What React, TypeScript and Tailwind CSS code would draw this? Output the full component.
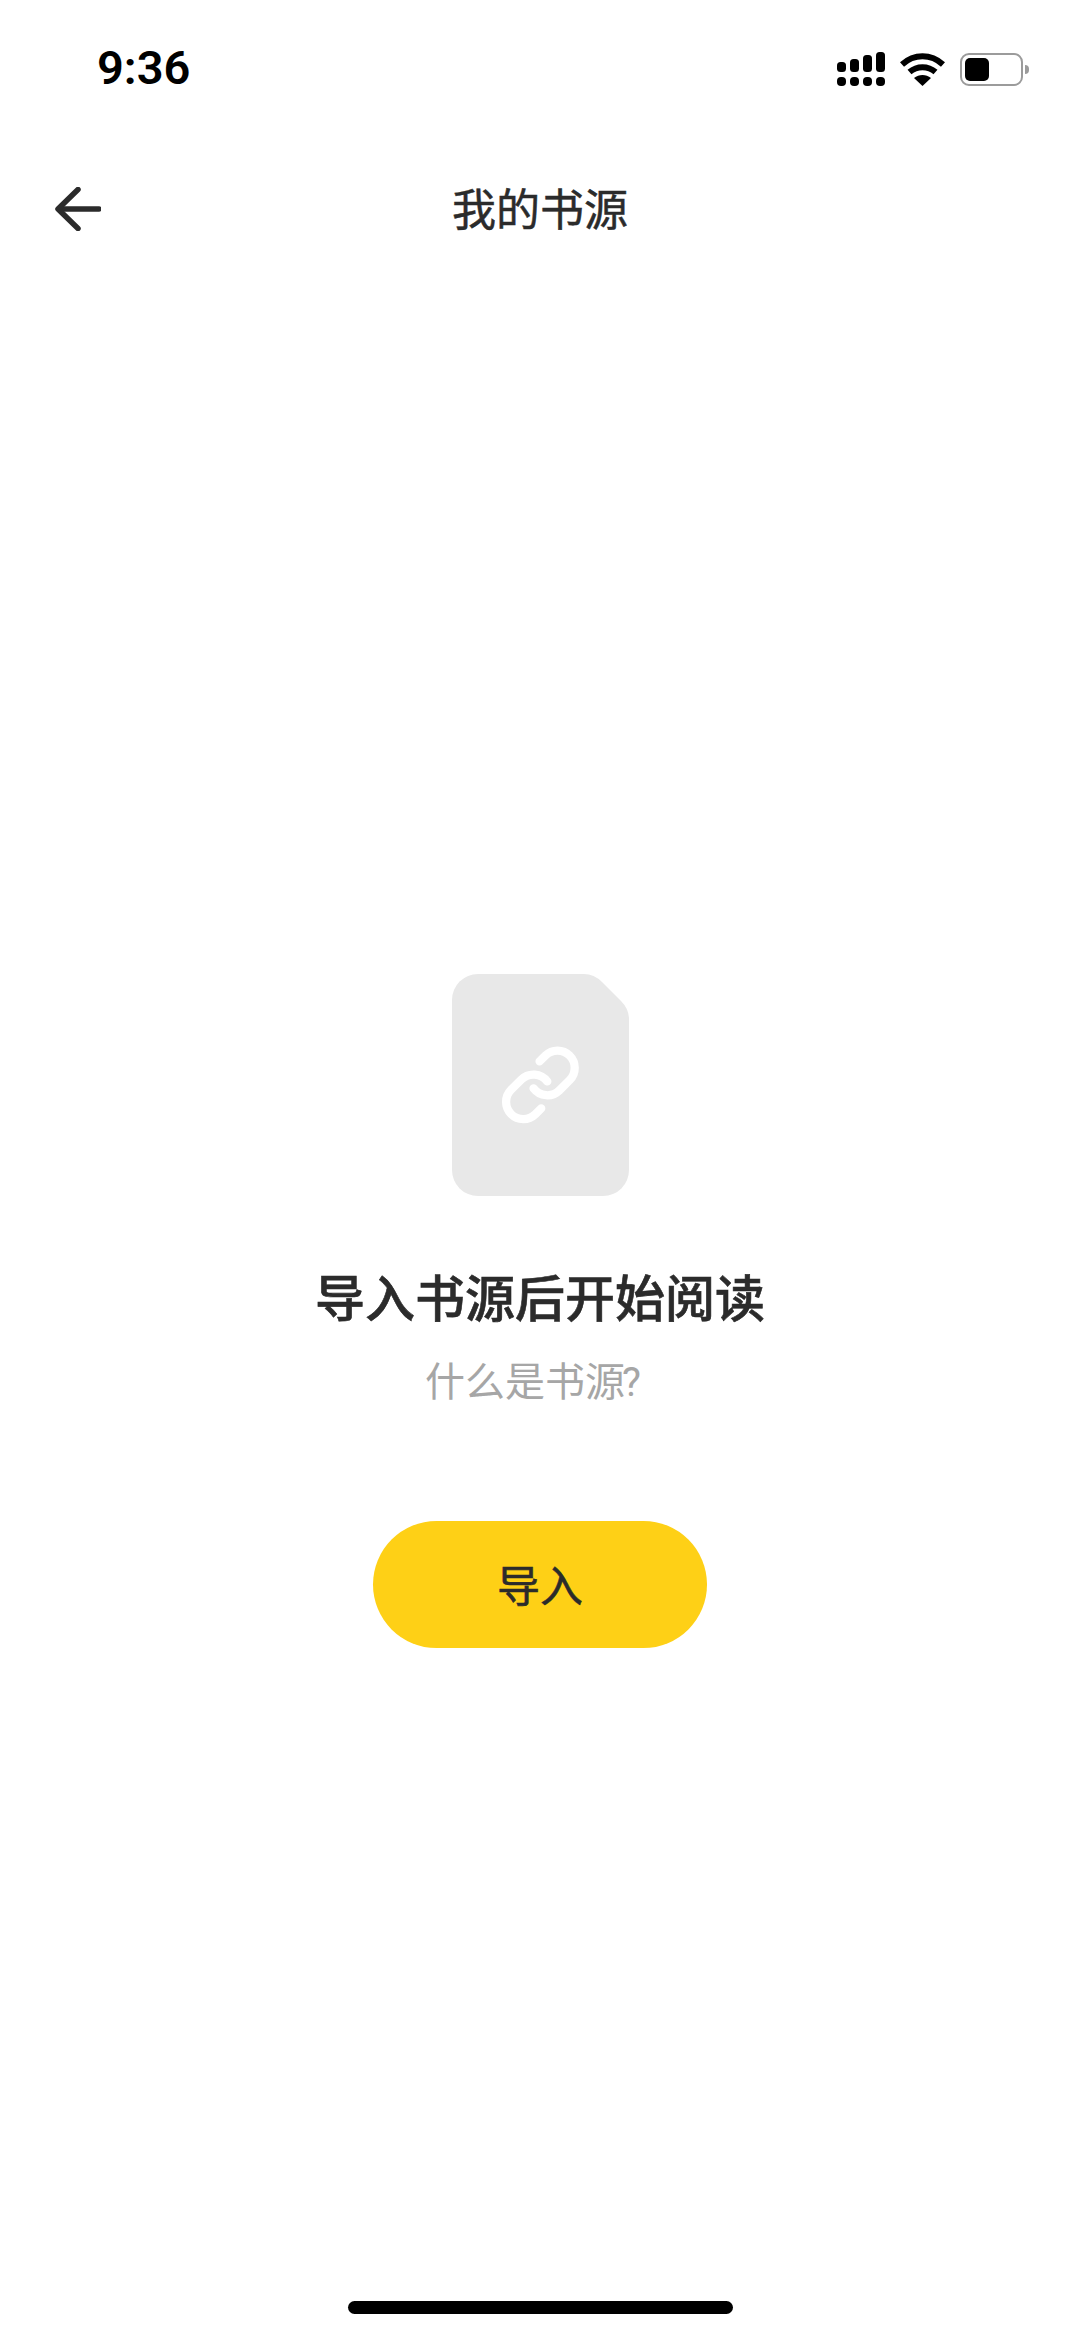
import { ReactNode } from "react";

const cjk = "font-['Noto_Sans_CJK_SC','Noto_Sans',sans-serif]";

function SignalIcon() {
  const xs = [0, 13, 26, 39];
  const tops = [10, 7, 3, 0];
  return (
    <svg width="48" height="34" viewBox="0 0 48 34" fill="#000">
      {xs.map((x, i) => (
        <g key={x}>
          <rect x={x} y={tops[i]} width="9" height={20 - tops[i]} rx="3.5" />
          <rect x={x} y="25" width="9" height="9" rx="4" />
        </g>
      ))}
    </svg>
  );
}

function WifiIcon() {
  return (
    <svg width="45" height="33" viewBox="0 0 45 33" fill="none" stroke="#000" strokeWidth="6">
      <path d="M2 11.5C14 0.5 31 0.5 43 11.5" />
      <path d="M9.5 19C17 12.5 28 12.5 35.5 19" />
      <path d="M22.5 33L14 25C19 21 26 21 31 25Z" fill="#000" stroke="none" />
    </svg>
  );
}

function BatteryIcon() {
  return (
    <div className="flex items-center">
      <div className="flex h-[33px] w-[63px] items-center rounded-[9px] border-[2.5px] border-[#9b9b9b] pl-[3px]">
        <div className="h-[23px] w-[24px] rounded-[5px] bg-black" />
      </div>
      <div className="ml-[2px] h-[9px] w-[4px] rounded-r-full bg-[#9b9b9b]" />
    </div>
  );
}

function StatusBar() {
  return (
    <div className="flex h-[86px] items-end pl-[97px] pr-[51px]">
      <span className="mb-[-5px] font-['Roboto',sans-serif] text-[47px] leading-[46px] font-semibold text-black">
        9:36
      </span>
      <div className="ml-auto flex items-center">
        <SignalIcon />
        <div className="ml-[15px]">
          <WifiIcon />
        </div>
        <div className="ml-[15px]">
          <BatteryIcon />
        </div>
      </div>
    </div>
  );
}

function NavBar({ children }: { children: ReactNode }) {
  return (
    <div className="relative mt-[101px] flex h-[44px] items-center justify-center">
      <button className="absolute left-[55px] top-0">
        <svg width="46" height="44" viewBox="0 0 46 44" fill="none" stroke="#2b2b2b" strokeWidth="5.5" strokeLinecap="round" strokeLinejoin="round" className="block">
          <path d="M44 22H4" />
          <path d="M23 2.5L3 22L23 41.5" />
        </svg>
      </button>
      <h1 className={`${cjk} mt-[-5px] text-[44px] leading-[44px] font-normal [-webkit-text-stroke:0.5px_#2b2b2b] text-[#2b2b2b]`}>
        {children}
      </h1>
    </div>
  );
}

function SourceFileIcon() {
  return (
    <svg width="177" height="222" viewBox="0 0 177 222" className="block">
      <path
        d="M26 0H132Q142 0 150 8L169 27Q177 35 177 45V196A26 26 0 0 1 151 222H26A26 26 0 0 1 0 196V26A26 26 0 0 1 26 0Z"
        fill="#e8e8e8"
      />
      <g
        transform="translate(47 69.5) scale(3.45)"
        fill="none"
        stroke="#fff"
        strokeWidth="2.4"
        strokeLinecap="round"
        strokeLinejoin="round"
      >
        <path d="M10 13a5 5 0 0 0 7.54.54l3-3a5 5 0 0 0-7.07-7.07l-1.72 1.71" />
        <path d="M14 11a5 5 0 0 0-7.54-.54l-3 3a5 5 0 0 0 7.07 7.07l1.71-1.71" />
      </g>
    </svg>
  );
}

export default function App() {
  return (
    <div className="flex h-[2337px] w-[1080px] flex-col overflow-hidden bg-white">
      <StatusBar />
      <NavBar>我的书源</NavBar>

      <main className="mt-[743px] flex flex-col items-center">
        <SourceFileIcon />
        <h2 className={`${cjk} mt-[71px] text-[50px] leading-[56px] font-medium [-webkit-text-stroke:0.6px_#2b2b2b] text-[#2b2b2b]`}>
          导入书源后开始阅读
        </h2>
        <button className={`${cjk} mt-[34px] pr-[14px] text-[40px] leading-[44px] text-[#a6a6a6]`}>
          什么是书源<span className="ml-[-3px] font-['Roboto',sans-serif]">?</span>
        </button>
        <button
          className={`${cjk} mt-[116px] flex h-[127px] w-[334px] items-center justify-center rounded-full bg-[#fed016] pb-[2px] text-[43px] font-normal [-webkit-text-stroke:0.6px_#2b2b2b] text-[#2b2b2b]`}
        >
          导入
        </button>
      </main>

      <div className="mt-auto mb-[23px] h-[13px] w-[385px] self-center rounded-full bg-black" />
    </div>
  );
}
